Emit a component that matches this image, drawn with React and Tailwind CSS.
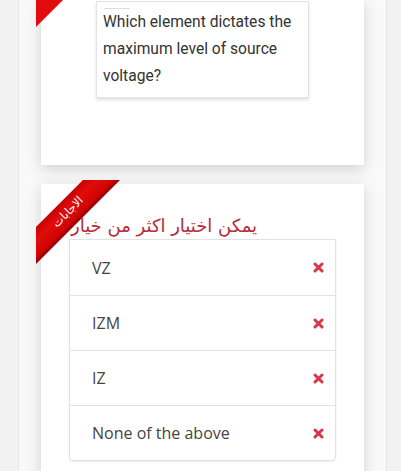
const answers = ["VZ", "IZM", "IZ", "None of the above"];

function CrossIcon() {
  return (
    <svg width="11" height="11" viewBox="0 0 11 11" className="shrink-0">
      <path d="M2 2 L9 9 M9 2 L2 9" stroke="#d63649" strokeWidth="3" strokeLinecap="round" />
    </svg>
  );
}

function Ribbon({ label }) {
  return (
    <svg width="92" height="92" viewBox="0 0 92 92" className="absolute left-[-5px] top-[-4px] z-10 overflow-visible">
      <defs>
        <linearGradient id="rib" x1="0" y1="0" x2="84" y2="84" gradientUnits="userSpaceOnUse">
          <stop offset="0.28" stopColor="#c80000" />
          <stop offset="0.36" stopColor="#e20c0c" />
          <stop offset="0.46" stopColor="#d00404" />
          <stop offset="0.5" stopColor="#8e0000" />
        </linearGradient>
      </defs>
      <polygon points="47,0 84,0 0,84 0,47" fill="url(#rib)" />
      <text
        x="32"
        y="32"
        transform="rotate(-45 32 32)"
        textAnchor="middle"
        dominantBaseline="middle"
        fill="#ffffff"
        fontSize="11.5"
        fontFamily="'DejaVu Sans', sans-serif"
      >
        {label}
      </text>
    </svg>
  );
}

export default function App() {
  return (
    <div className="h-[471px] overflow-hidden bg-[#f2f2f2]">
      <div className="ml-[18px] h-full w-[369px] border-x border-[#e6e6e6] bg-[#f9f9f9] px-[22px]">
        {/* ── Question card ── */}
        <div className="relative h-[165px] bg-white shadow-[0_4px_14px_rgba(0,0,0,0.16)]">
          <svg width="30" height="30" viewBox="0 0 30 30" className="absolute left-[-5px] top-0">
            <defs>
              <linearGradient id="rib1" x1="0" y1="0" x2="27" y2="27" gradientUnits="userSpaceOnUse">
                <stop offset="0.6" stopColor="#e20c0c" />
                <stop offset="0.9" stopColor="#b80000" />
                <stop offset="1" stopColor="#8e0000" />
              </linearGradient>
            </defs>
            <polygon points="0,0 27,0 0,27" fill="url(#rib1)" />
          </svg>

          <div className="pt-px">
            <div className="mx-auto w-[213px] border border-[#e3e3e3] bg-white px-[6px] pb-[7px] shadow-[0_2px_3px_rgba(0,0,0,0.12)]">
              <div className="ml-[1px] mt-[6px] h-px w-[26px] bg-[#dddddd]" />
              <p className="text-[15.6px] leading-[27px] text-[#333333]" style={{ fontFamily: "Roboto, sans-serif" }}>
                Which element dictates the maximum level of source voltage?
              </p>
            </div>
          </div>
        </div>

        {/* ── Answers card ── */}
        <div className="relative mt-[19px] h-[300px] bg-white px-[28px] pt-[28px] shadow-[0_4px_14px_rgba(0,0,0,0.16)]">
          <Ribbon label="الاجابات" />

          <div className="flex">
            <h3
              dir="rtl"
              className="pl-[2px] text-[18px] leading-[27px] text-[#b52b3c]"
              style={{ fontFamily: "'DejaVu Sans', sans-serif" }}
            >
              يمكن اختيار اكثر من خيار
            </h3>
          </div>

          <div className="rounded-b-[4px] border border-[#e2e2e2] bg-white shadow-[0_1px_2px_rgba(0,0,0,0.08)]">
            {answers.map((a, i) => (
              <div
                key={a}
                className={`flex h-[55px] items-center justify-between pl-[22px] pr-[11px] ${
                  i > 0 ? "border-t border-[#e2e2e2]" : ""
                }`}
              >
                <span className="text-[16px] text-[#444444]" style={{ fontFamily: "'Open Sans', sans-serif" }}>
                  {a}
                </span>
                <CrossIcon />
              </div>
            ))}
          </div>
        </div>
      </div>
    </div>
  );
}
